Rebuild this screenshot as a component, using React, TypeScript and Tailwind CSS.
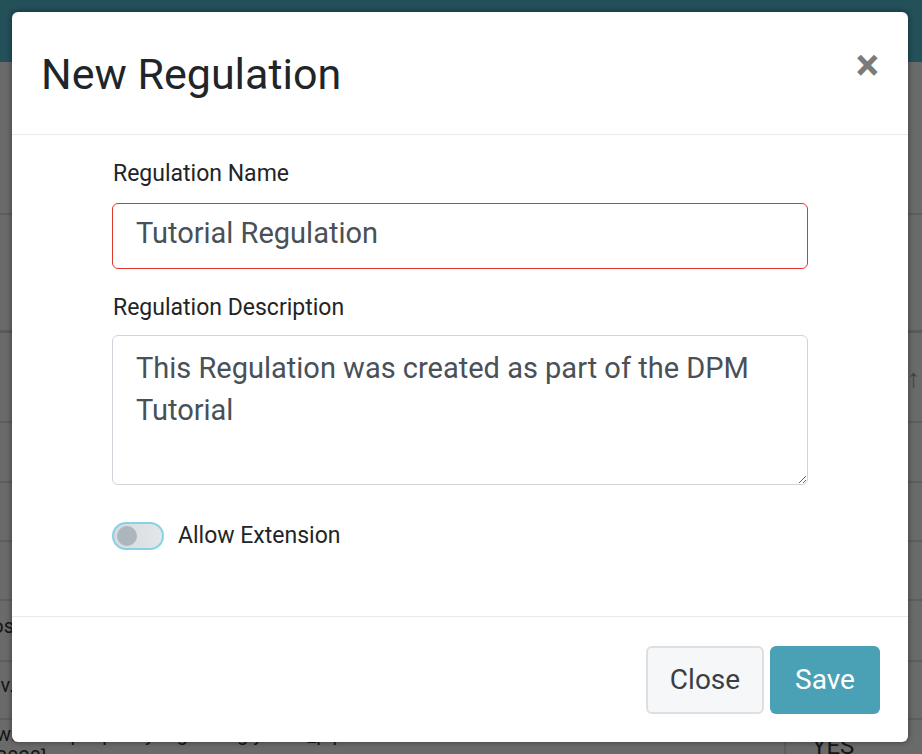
import { useState } from "react";

const rowHeights = [153, 118, 90, 60, 59, 59, 61, 58];

const BackgroundPage = () => {
  return (
    <div className="min-h-[754px] bg-[#6a6a6a] font-[Roboto,sans-serif] text-[20px] text-[#161616]">
      <div className="h-[62px] bg-[#24505a]" />
      {rowHeights.map((h, i) => (
        <div
          key={i}
          style={{ height: h }}
          className={
            i === 1
              ? "flex border-b-[3px] border-[#5b5b5b] items-start"
              : i === 2
              ? "flex border-b-2 border-[#5e5e5e] items-start justify-end pr-[2px]"
              : "flex border-b-2 border-[#5e5e5e] items-start"
          }
        >
          {i === 2 && <span className="mt-[26px] text-[26px] font-bold text-[#444]">↑</span>}
          {i === 6 && <span className="-ml-[22px] mt-[10px]">Hosted</span>}
          {i === 7 && <span className="-ml-[25px] mt-[8px]">Nov.</span>}
        </div>
      ))}
      <div className="flex">
        <div className="w-[788px] -ml-[4px] pt-[3px]">
          <div className="leading-[22px]">wl Example policy regulating y data_pipeline</div>
          <div className="leading-[26px]">2020]</div>
        </div>
        <div className="border-l-2 border-[#5e5e5e] pl-[26px] pt-[8px] text-[24px]">YES</div>
      </div>
    </div>
  );
};

const Toggle = () => {
  const [on, setOn] = useState(false);
  return (
    <button
      onClick={() => setOn(!on)}
      className="relative w-[52px] h-[28px] rounded-full border-2 border-[#86d3e6] bg-gradient-to-r from-[#d6d9dd] to-[#e4e7ea] shrink-0"
    >
      <span
        className={
          on
            ? "absolute top-[2px] left-[26px] w-[20px] h-[20px] rounded-full bg-[#adb5bd]"
            : "absolute top-[2px] left-[3px] w-[20px] h-[20px] rounded-full bg-[#adb5bd]"
        }
      />
    </button>
  );
};

export default function App() {
  return (
    <div className="relative w-[922px] h-[754px] overflow-hidden">
      <BackgroundPage />
      <div className="absolute left-[12px] top-[12px] w-[896px] h-[730px] flex flex-col bg-white rounded-[6px] shadow-[0_0_6px_rgba(0,0,0,0.45)] font-[Roboto,sans-serif]">
        <div className="h-[123px] flex items-center justify-between pl-[29px] pr-[29px] border-b border-[#e9e9ee]">
          <h5 className="text-[43px] leading-none text-[#212529] pt-[2px]">New Regulation</h5>
          <button className="text-[44px] font-bold leading-none text-[#7b7b7b] -mt-[16px]">×</button>
        </div>

        <div className="flex-1 border-b border-[#e9e9ee]">
          <div className="mx-auto w-[696px] pt-[24px]">
            <label className="block text-[23px] leading-[30px] text-[#212529] mb-[14px] pl-[1px]">
              Regulation Name
            </label>
            <input
              defaultValue="Tutorial Regulation"
              className="block w-full h-[66px] rounded-[6px] border border-[#e0362c] pl-[23px] pb-[6px] text-[29px] text-[#495057] outline-none"
            />
            <label className="block text-[23px] leading-[30px] text-[#212529] mt-[24px] mb-[12px] pl-[1px]">
              Regulation Description
            </label>
            <textarea
              defaultValue="This Regulation was created as part of the DPM Tutorial"
              className="block w-full h-[150px] rounded-[6px] border border-[#ced4da] px-[23px] pt-[11px] text-[29px] leading-[42px] text-[#495057] outline-none"
            />
            <div className="flex items-center gap-[14px] mt-[34px]">
              <Toggle />
              <span className="text-[23px] text-[#212529]">Allow Extension</span>
            </div>
          </div>
        </div>

        <div className="h-[125px] flex items-start justify-end gap-[6px] pt-[29px] pr-[28px]">
          <button className="w-[118px] h-[68px] rounded-[6px] border-2 border-[#dedfe0] bg-[#f6f7f9] text-[28px] text-[#3a3f44]">
            Close
          </button>
          <button className="w-[110px] h-[68px] rounded-[6px] bg-[#4aa1b5] text-[28px] text-white">
            Save
          </button>
        </div>
      </div>
    </div>
  );
}
